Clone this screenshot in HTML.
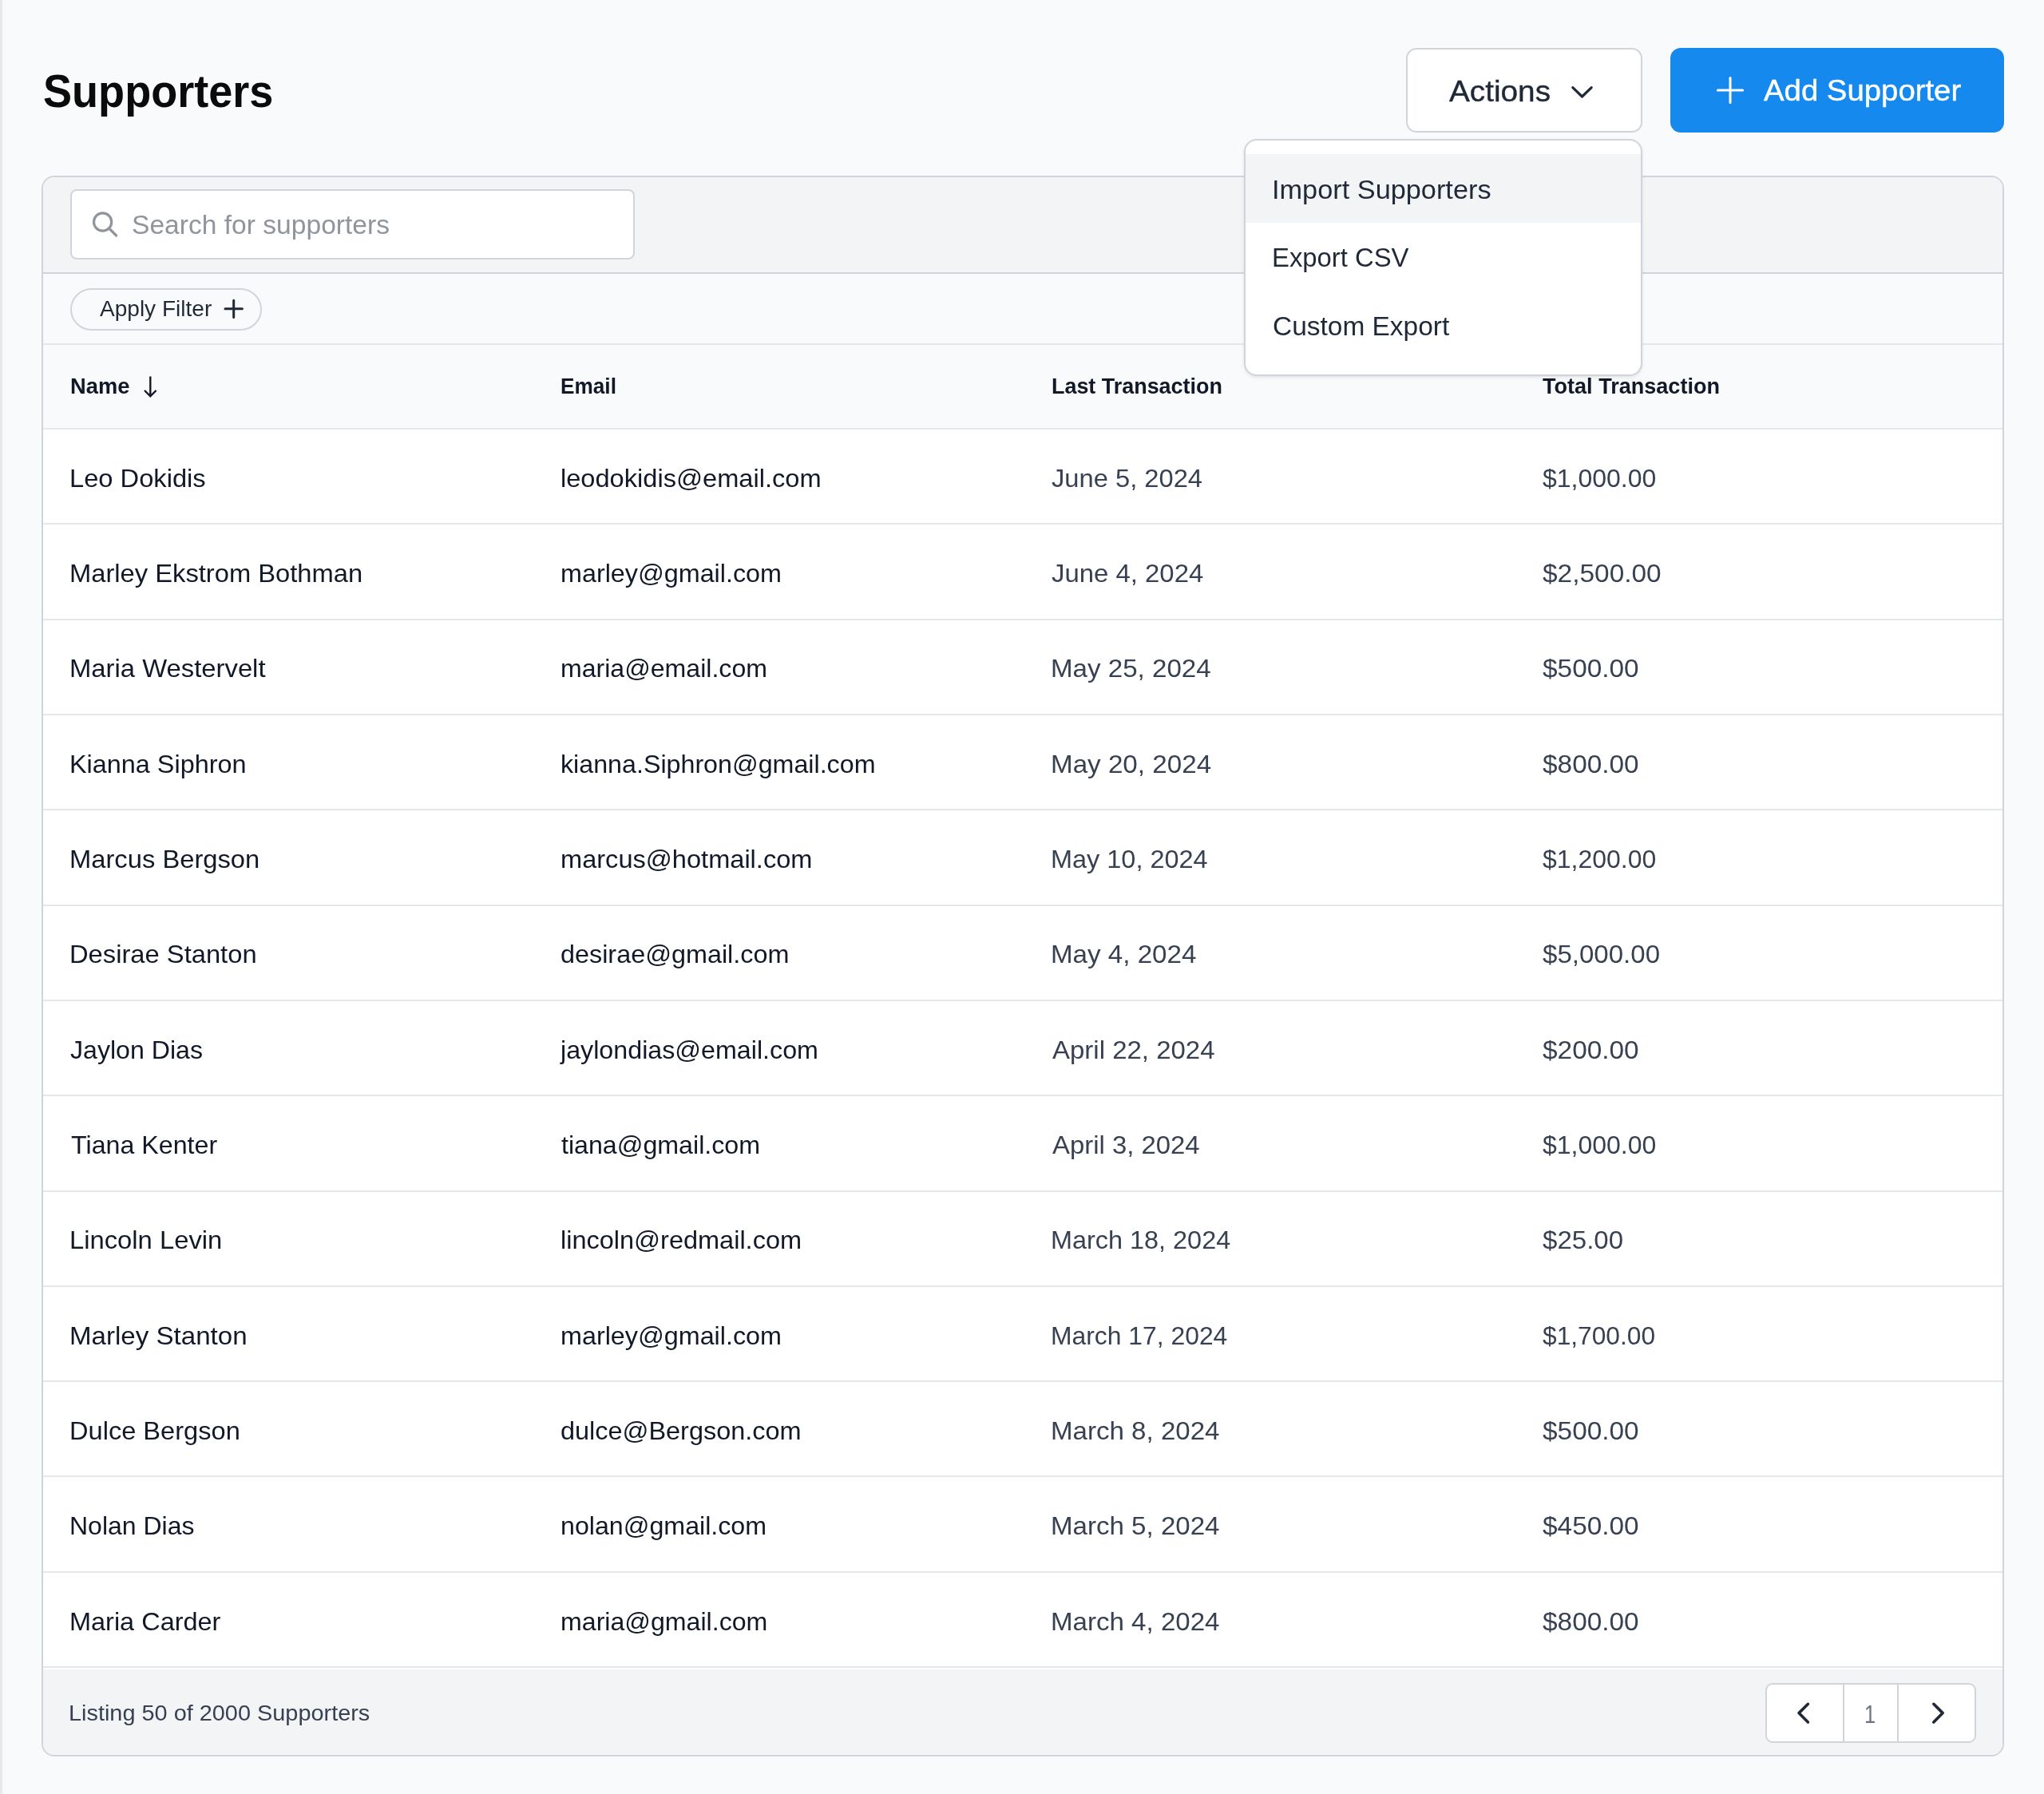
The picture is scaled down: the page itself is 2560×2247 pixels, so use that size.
<!DOCTYPE html>
<html lang="en"><head><meta charset="utf-8"><title>Supporters</title>
<style>
html,body{margin:0;padding:0}
body{width:2560px;height:2247px;background:#f9fafb;position:relative;overflow:hidden;font-family:"Liberation Sans", sans-serif;}
*{box-sizing:border-box}
#app{position:absolute;left:0;top:0;width:2560px;height:2247px;will-change:transform}
.t{position:absolute;white-space:nowrap;line-height:1;margin:0;padding:0;transform-origin:0 50%;font-weight:400;display:block}
.edge{position:absolute;left:0;top:0;width:4px;height:2247px;background:linear-gradient(to right,#e5e7eb 0,#e5e7eb 2px,#eff1f4 3px,#f9fafb 4px)}
button{font-family:inherit;margin:0;padding:0;position:absolute;display:block}
.btn-actions{left:1761px;top:60px;width:296px;height:106px;background:#fff;border:2px solid #d1d5db;border-radius:13px}
.btn-add{left:2092px;top:60px;width:418px;height:106px;background:#1589ee;border:0;border-radius:13px}
svg{position:absolute;overflow:visible}
.card{position:absolute;left:52px;top:220px;width:2458px;height:1980px;border:2px solid #d1d5db;border-radius:16px;overflow:hidden;background:#fff}
.sec{position:absolute;left:0;width:100%}
.search-sec{top:0;height:121px;background:#f3f4f6;border-bottom:2px solid #d1d5db}
.search{position:absolute;left:34px;top:15px;width:707px;height:88px;border:2px solid #d1d5db;border-radius:8px;background:#fff}
.filter-sec{top:121px;height:89px;background:#f9fafb;border-bottom:2px solid #e5e7eb}
.pill{position:absolute;left:34px;top:18px;width:240px;height:53px;border:2px solid #d1d5db;border-radius:27px;background:#f9fafb}
.thead{top:210px;height:106px;background:#f9fafb;border-bottom:2px solid #e5e7eb}
.tbody{top:316.0px}
.row{position:relative;height:119.3125px;border-bottom:2px solid #e5e7eb;background:#fff;width:100%}
.tfoot{top:1869px;height:107px;background:#f3f4f6}
.pager{position:absolute;left:2157px;top:17px;width:264px;height:75px;border:2px solid #d1d5db;border-radius:9px;background:#fff;overflow:hidden}
.pager i{position:absolute;top:0;width:2px;height:100%;background:#d1d5db}
.menu{position:absolute;left:1558px;top:174px;width:499px;height:297px;margin:0;padding:0;list-style:none;background:#fff;border:2px solid #d1d5db;border-radius:16px;box-shadow:0 2px 5px rgba(17,24,39,.07),0 1px 2px rgba(17,24,39,.04);overflow:hidden}
.menu li{position:absolute;left:0;width:100%;height:86px}
.menu li.on{background:#f3f4f6}
</style></head>
<body>
<div id="app">
<div class="edge"></div>
<header>
<h1 class="t" style="left:53.56px;top:85.60px;font-size:57px;font-weight:700;color:#0b0b0c;transform:scaleX(0.9487);">Supporters</h1>
<button class="btn-actions" type="button"><span class="t" style="left:52.00px;top:33.60px;font-size:37px;color:#1f2937;transform:scaleX(1.0468);-webkit-text-stroke:0.4px #1f2937;">Actions</span><svg style="left:0;top:0" width="1" height="1" aria-hidden="true"><path d="M206.8 47.6 L218.5 59.0 L230.2 47.6" fill="none" stroke="#1f2937" stroke-width="3.2" stroke-linecap="round" stroke-linejoin="round"/></svg></button>
<button class="btn-add" type="button"><svg style="left:0;top:0" width="1" height="1" aria-hidden="true"><path d="M75.0 37.4 V68.6 M59.4 53.0 H90.6" fill="none" stroke="#fff" stroke-width="3" stroke-linecap="round" stroke-linejoin="round"/></svg><span class="t" style="left:117.00px;top:35.40px;font-size:37px;color:#ffffff;transform:scaleX(1.0360);-webkit-text-stroke:0.4px #ffffff;">Add Supporter</span></button>
</header>
<main class="card">
<div class="sec search-sec"><div class="search">
<svg style="left:0;top:0" width="1" height="1" aria-hidden="true"><circle cx="38.6" cy="39.0" r="11.1" fill="none" stroke="#8f949d" stroke-width="3.2"/><path d="M46.6 47.0 L55.6 56.0" fill="none" stroke="#8f949d" stroke-width="3.2" stroke-linecap="round" stroke-linejoin="round"/></svg>
<span class="t" style="left:75.45px;top:25.60px;font-size:33px;color:#8f949d;transform:scaleX(1.0179);">Search for supporters</span>
</div></div>
<div class="sec filter-sec"><div class="pill">
<span class="t" style="left:35.20px;top:10.30px;font-size:27.5px;color:#1f2937;transform:scaleX(1.0195);">Apply Filter</span>
<svg style="left:0;top:0" width="1" height="1" aria-hidden="true"><path d="M202.7 13.2 V34.4 M192.0 23.8 H213.4" fill="none" stroke="#1f2937" stroke-width="3" stroke-linecap="round" stroke-linejoin="round"/></svg>
</div></div>
<div class="sec thead">
<span class="t" style="left:33.73px;top:39.30px;font-size:27px;font-weight:700;color:#111827;transform:scaleX(1.0113);">Name</span>
<span class="t" style="left:648.00px;top:39.30px;font-size:27px;font-weight:700;color:#111827;transform:scaleX(0.9706);">Email</span>
<span class="t" style="left:1262.56px;top:39.30px;font-size:27px;font-weight:700;color:#111827;transform:scaleX(0.9967);">Last Transaction</span>
<span class="t" style="left:1877.85px;top:39.30px;font-size:27px;font-weight:700;color:#111827;transform:scaleX(1.0020);">Total Transaction</span>
<svg style="left:0;top:0" width="1" height="1" aria-hidden="true"><path d="M134.3 39.5 V64.3 M127.0 57.0 L134.3 64.3 L141.6 57.0" fill="none" stroke="#111827" stroke-width="2.4" stroke-linecap="butt" stroke-linejoin="miter"/></svg>
</div>
<div class="sec tbody">
<div class="row"><span class="t" style="left:33.22px;top:44.75px;font-size:32px;color:#111827;transform:scaleX(1.0205);">Leo Dokidis</span><span class="t" style="left:647.54px;top:44.75px;font-size:32px;color:#111827;transform:scaleX(1.0185);">leodokidis@email.com</span><span class="t" style="left:1263.09px;top:44.75px;font-size:32px;color:#374151;transform:scaleX(1.0216);">June 5, 2024</span><span class="t" style="left:1878.35px;top:44.75px;font-size:32px;color:#374151;transform:scaleX(0.9997);">$1,000.00</span></div>
<div class="row"><span class="t" style="left:33.22px;top:44.77px;font-size:32px;color:#111827;transform:scaleX(1.0221);">Marley Ekstrom Bothman</span><span class="t" style="left:647.55px;top:44.77px;font-size:32px;color:#111827;transform:scaleX(1.0098);">marley@gmail.com</span><span class="t" style="left:1263.09px;top:44.77px;font-size:32px;color:#374151;transform:scaleX(1.0282);">June 4, 2024</span><span class="t" style="left:1878.34px;top:44.77px;font-size:32px;color:#374151;transform:scaleX(1.0444);">$2,500.00</span></div>
<div class="row"><span class="t" style="left:33.21px;top:44.78px;font-size:32px;color:#111827;transform:scaleX(1.0253);">Maria Westervelt</span><span class="t" style="left:647.57px;top:44.78px;font-size:32px;color:#111827;transform:scaleX(1.0025);">maria@email.com</span><span class="t" style="left:1261.78px;top:44.78px;font-size:32px;color:#374151;transform:scaleX(1.0349);">May 25, 2024</span><span class="t" style="left:1878.34px;top:44.78px;font-size:32px;color:#374151;transform:scaleX(1.0433);">$500.00</span></div>
<div class="row"><span class="t" style="left:33.24px;top:44.80px;font-size:32px;color:#111827;transform:scaleX(1.0123);">Kianna Siphron</span><span class="t" style="left:647.56px;top:44.80px;font-size:32px;color:#111827;transform:scaleX(1.0069);">kianna.Siphron@gmail.com</span><span class="t" style="left:1261.78px;top:44.80px;font-size:32px;color:#374151;transform:scaleX(1.0370);">May 20, 2024</span><span class="t" style="left:1878.34px;top:44.80px;font-size:32px;color:#374151;transform:scaleX(1.0433);">$800.00</span></div>
<div class="row"><span class="t" style="left:33.22px;top:44.82px;font-size:32px;color:#111827;transform:scaleX(1.0227);">Marcus Bergson</span><span class="t" style="left:647.54px;top:44.82px;font-size:32px;color:#111827;transform:scaleX(1.0179);">marcus@hotmail.com</span><span class="t" style="left:1261.84px;top:44.82px;font-size:32px;color:#374151;transform:scaleX(1.0139);">May 10, 2024</span><span class="t" style="left:1878.35px;top:44.82px;font-size:32px;color:#374151;transform:scaleX(0.9990);">$1,200.00</span></div>
<div class="row"><span class="t" style="left:33.22px;top:44.84px;font-size:32px;color:#111827;transform:scaleX(1.0223);">Desirae Stanton</span><span class="t" style="left:648.04px;top:44.84px;font-size:32px;color:#111827;transform:scaleX(1.0112);">desirae@gmail.com</span><span class="t" style="left:1261.78px;top:44.84px;font-size:32px;color:#374151;transform:scaleX(1.0359);">May 4, 2024</span><span class="t" style="left:1878.34px;top:44.84px;font-size:32px;color:#374151;transform:scaleX(1.0331);">$5,000.00</span></div>
<div class="row"><span class="t" style="left:34.30px;top:44.86px;font-size:32px;color:#111827;transform:scaleX(1.0038);">Jaylon Dias</span><span class="t" style="left:648.28px;top:44.86px;font-size:32px;color:#111827;transform:scaleX(1.0073);">jaylondias@email.com</span><span class="t" style="left:1263.60px;top:44.86px;font-size:32px;color:#374151;transform:scaleX(1.0305);">April 22, 2024</span><span class="t" style="left:1878.34px;top:44.86px;font-size:32px;color:#374151;transform:scaleX(1.0433);">$200.00</span></div>
<div class="row"><span class="t" style="left:34.77px;top:44.87px;font-size:32px;color:#111827;transform:scaleX(1.0062);">Tiana Kenter</span><span class="t" style="left:648.82px;top:44.87px;font-size:32px;color:#111827;transform:scaleX(1.0054);">tiana@gmail.com</span><span class="t" style="left:1263.60px;top:44.87px;font-size:32px;color:#374151;transform:scaleX(1.0271);">April 3, 2024</span><span class="t" style="left:1878.35px;top:44.87px;font-size:32px;color:#374151;transform:scaleX(0.9997);">$1,000.00</span></div>
<div class="row"><span class="t" style="left:33.21px;top:44.89px;font-size:32px;color:#111827;transform:scaleX(1.0240);">Lincoln Levin</span><span class="t" style="left:647.54px;top:44.89px;font-size:32px;color:#111827;transform:scaleX(1.0153);">lincoln@redmail.com</span><span class="t" style="left:1261.84px;top:44.89px;font-size:32px;color:#374151;transform:scaleX(1.0127);">March 18, 2024</span><span class="t" style="left:1878.34px;top:44.89px;font-size:32px;color:#374151;transform:scaleX(1.0326);">$25.00</span></div>
<div class="row"><span class="t" style="left:33.18px;top:44.91px;font-size:32px;color:#111827;transform:scaleX(1.0344);">Marley Stanton</span><span class="t" style="left:647.55px;top:44.91px;font-size:32px;color:#111827;transform:scaleX(1.0098);">marley@gmail.com</span><span class="t" style="left:1261.89px;top:44.91px;font-size:32px;color:#374151;transform:scaleX(0.9954);">March 17, 2024</span><span class="t" style="left:1878.35px;top:44.91px;font-size:32px;color:#374151;transform:scaleX(0.9912);">$1,700.00</span></div>
<div class="row"><span class="t" style="left:33.23px;top:44.92px;font-size:32px;color:#111827;transform:scaleX(1.0184);">Dulce Bergson</span><span class="t" style="left:648.03px;top:44.92px;font-size:32px;color:#111827;transform:scaleX(1.0135);">dulce@Bergson.com</span><span class="t" style="left:1261.79px;top:44.92px;font-size:32px;color:#374151;transform:scaleX(1.0338);">March 8, 2024</span><span class="t" style="left:1878.34px;top:44.92px;font-size:32px;color:#374151;transform:scaleX(1.0433);">$500.00</span></div>
<div class="row"><span class="t" style="left:33.28px;top:44.94px;font-size:32px;color:#111827;transform:scaleX(0.9996);">Nolan Dias</span><span class="t" style="left:647.56px;top:44.94px;font-size:32px;color:#111827;transform:scaleX(1.0058);">nolan@gmail.com</span><span class="t" style="left:1261.79px;top:44.94px;font-size:32px;color:#374151;transform:scaleX(1.0338);">March 5, 2024</span><span class="t" style="left:1878.34px;top:44.94px;font-size:32px;color:#374151;transform:scaleX(1.0433);">$450.00</span></div>
<div class="row"><span class="t" style="left:33.24px;top:44.96px;font-size:32px;color:#111827;transform:scaleX(1.0144);">Maria Carder</span><span class="t" style="left:647.57px;top:44.96px;font-size:32px;color:#111827;transform:scaleX(1.0041);">maria@gmail.com</span><span class="t" style="left:1261.79px;top:44.96px;font-size:32px;color:#374151;transform:scaleX(1.0338);">March 4, 2024</span><span class="t" style="left:1878.34px;top:44.96px;font-size:32px;color:#374151;transform:scaleX(1.0433);">$800.00</span></div>
</div>
<div class="sec tfoot">
<span class="t" style="left:32.24px;top:40.80px;font-size:27.5px;color:#374151;transform:scaleX(1.0501);">Listing 50 of 2000 Supporters</span>
<div class="pager"><i style="left:95px"></i><i style="left:163px"></i>
<svg style="left:0;top:0" width="1" height="1" aria-hidden="true"><path d="M51.4 24.3 L40.0 35.6 L51.4 47.0" fill="none" stroke="#1f2937" stroke-width="3.6" stroke-linecap="round" stroke-linejoin="round"/><path d="M208.8 24.3 L220.2 35.6 L208.8 47.0" fill="none" stroke="#1f2937" stroke-width="3.6" stroke-linecap="round" stroke-linejoin="round"/></svg>
<span class="t" style="left:121.62px;top:20.80px;font-size:32px;color:#6b7280;transform:scaleX(0.7928);">1</span>
</div></div>
</main>
<ul class="menu">
<li class="on" style="top:17px"><span class="t" style="left:32.82px;top:27.50px;font-size:33px;color:#1f2937;transform:scaleX(1.0395);">Import Supporters</span></li>
<li style="top:103px"><span class="t" style="left:32.94px;top:27.40px;font-size:33px;color:#1f2937;transform:scaleX(0.9948);">Export CSV</span></li>
<li style="top:189px"><span class="t" style="left:33.93px;top:27.20px;font-size:33px;color:#1f2937;transform:scaleX(1.0138);">Custom Export</span></li>
</ul>
</div>
</body></html>
